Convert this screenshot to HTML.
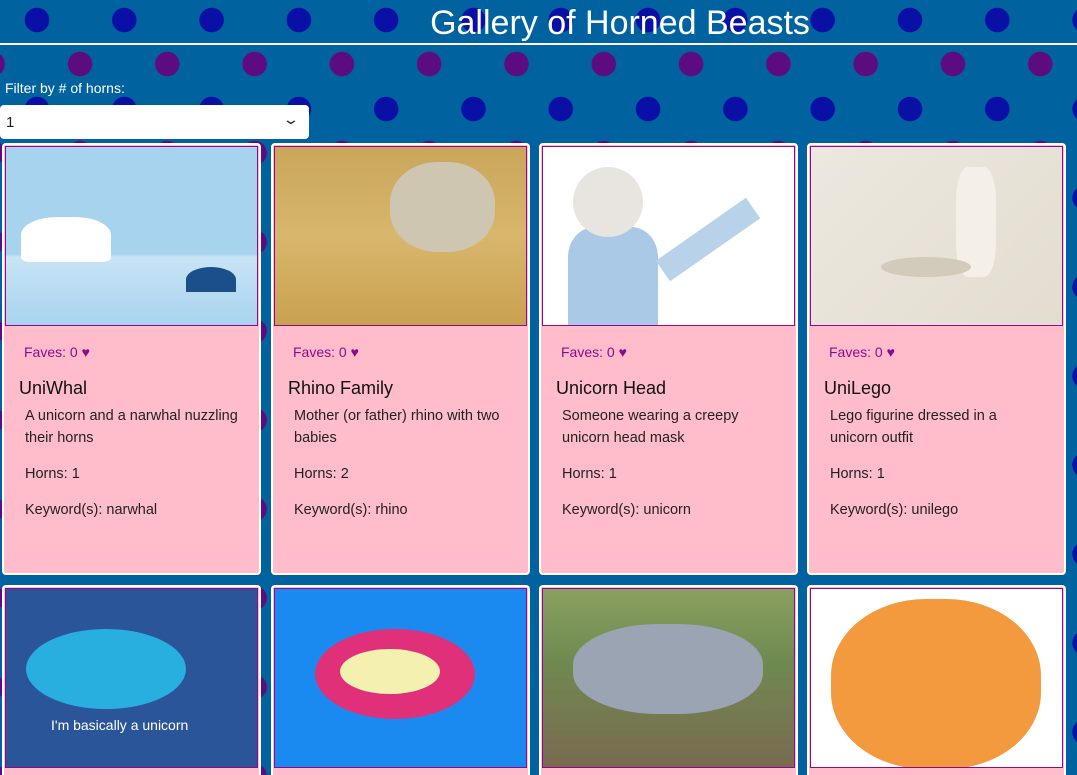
<!DOCTYPE html>
<html style="height:775px;overflow:hidden"><head><style>
*{box-sizing:border-box}
body{margin:0;width:1077px;height:775px;overflow:hidden;position:relative;font-family:"Liberation Sans",sans-serif;
background-color:#0063a0;
background-image:radial-gradient(circle at 43px 44px,#0a0fa6 12px,transparent 12.5px),radial-gradient(circle at 43px 44px,#5c0c80 12px,transparent 12.5px);
background-size:87.3px 89px,87.3px 89px;background-position:-6px -24px,37px 20px;}
h1{margin:0;height:45px;border-bottom:2px solid #fff;color:#fff;font-weight:400;font-size:34px;text-align:center;padding-left:163px;line-height:46px}
.lab{color:#fff;font-size:14px;position:absolute;left:5px;top:80px}
.sel{position:absolute;left:0;top:105px;width:309px;height:34px;background:#fff;border-radius:4px;font-size:15px;padding:9px 6px;color:#222}
.sel span{position:absolute;right:12px;top:6px;font-size:14px;transform:scaleX(1.5)}
.card{position:absolute;width:259px;height:432px;background:#ffbdcb;border:2px solid #fff;border-radius:4px}
.b{height:190px;border-bottom:none;border-radius:4px 4px 0 0}
.img{position:absolute;left:1px;top:1px;width:253px;height:180px;border:1px solid #8d0a8d;overflow:hidden}
.fav{position:absolute;left:20px;top:199px;color:#8d0a8d;font-size:14px}
.t{position:absolute;left:15px;top:233px;font-size:18px;color:#111}
.d{position:absolute;left:21px;top:260px;width:218px;font-size:14.5px;line-height:22px;color:#222}
.h{position:absolute;left:21px;top:321px;font-size:14.5px;color:#222}
.k{position:absolute;left:21px;top:357px;font-size:14.5px;color:#222}
</style></head><body>
<h1>Gallery of Horned Beasts</h1>
<div class="lab">Filter by # of horns:</div>
<div class="sel">1<span>⌄</span></div>

<div class="card" style="left:2px;top:143px"><div class="img" style="background:linear-gradient(180deg,#a8d3ef 0,#a8d3ef 60%,#c8e4f5 62%,#a8d3ef 100%)"><div style="position:absolute;left:15px;top:70px;width:90px;height:45px;background:#fff;border-radius:40% 40% 10% 10%"></div><div style="position:absolute;left:180px;top:120px;width:50px;height:25px;background:#1a4f8c;border-radius:50% 50% 0 0"></div></div>
<div class="fav">Faves: 0 ♥</div><div class="t">UniWhal</div><div class="d">A unicorn and a narwhal nuzzling their horns</div><div class="h">Horns: 1</div><div class="k">Keyword(s): narwhal</div></div>

<div class="card" style="left:271px;top:143px"><div class="img" style="background:linear-gradient(180deg,#c9a65a,#d8b66c 50%,#c9a250)"><div style="position:absolute;left:115px;top:15px;width:105px;height:90px;background:#cfc6b2;border-radius:45%"></div></div>
<div class="fav">Faves: 0 ♥</div><div class="t">Rhino Family</div><div class="d">Mother (or father) rhino with two babies</div><div class="h">Horns: 2</div><div class="k">Keyword(s): rhino</div></div>

<div class="card" style="left:539px;top:143px"><div class="img" style="background:#fff"><div style="position:absolute;left:25px;top:80px;width:90px;height:100px;background:#a9c9e6;border-radius:30% 30% 0 0"></div><div style="position:absolute;left:30px;top:20px;width:70px;height:70px;background:#e8e4e0;border-radius:50%"></div><div style="position:absolute;left:110px;top:80px;width:110px;height:25px;background:#b8d2ea;transform:rotate(-35deg)"></div></div>
<div class="fav">Faves: 0 ♥</div><div class="t">Unicorn Head</div><div class="d">Someone wearing a creepy unicorn head mask</div><div class="h">Horns: 1</div><div class="k">Keyword(s): unicorn</div></div>

<div class="card" style="left:807px;top:143px"><div class="img" style="background:linear-gradient(135deg,#ece8df,#e3ddd0)"><div style="position:absolute;left:145px;top:20px;width:40px;height:110px;background:#f4f0e8;border-radius:30%"></div><div style="position:absolute;left:70px;top:110px;width:90px;height:20px;background:#d2cabb;border-radius:50%"></div></div>
<div class="fav">Faves: 0 ♥</div><div class="t">UniLego</div><div class="d">Lego figurine dressed in a unicorn outfit</div><div class="h">Horns: 1</div><div class="k">Keyword(s): unilego</div></div>

<div class="card b" style="left:2px;top:585px"><div class="img" style="background:#2a5598"><div style="position:absolute;left:20px;top:40px;width:160px;height:80px;background:#29aee0;border-radius:50%"></div><div style="position:absolute;left:45px;top:128px;color:#fff;font-size:14px">I'm basically a unicorn</div></div></div>
<div class="card b" style="left:271px;top:585px"><div class="img" style="background:#1a8af0"><div style="position:absolute;left:40px;top:40px;width:160px;height:90px;background:#e0307a;border-radius:50%"></div><div style="position:absolute;left:65px;top:60px;width:100px;height:45px;background:#f4f0b0;border-radius:50%"></div></div></div>
<div class="card b" style="left:539px;top:585px"><div class="img" style="background:linear-gradient(180deg,#8aa060,#6f8a50 40%,#7a6a50)"><div style="position:absolute;left:30px;top:35px;width:190px;height:90px;background:#9aa4b2;border-radius:45%"></div></div></div>
<div class="card b" style="left:807px;top:585px"><div class="img" style="background:#fff"><div style="position:absolute;left:20px;top:10px;width:210px;height:170px;background:#f39a3e;border-radius:45%"></div></div></div>
</body></html>
